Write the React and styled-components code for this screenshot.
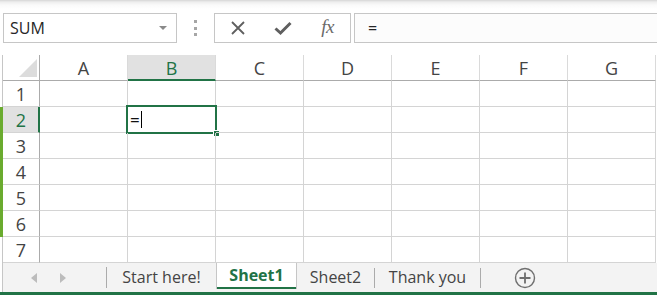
import React from "react";
import styled, { createGlobalStyle } from "styled-components";

const GREEN = "#217346";
const FONT = `"Open Sans", "Noto Sans", "Liberation Sans", sans-serif`;

const Global = createGlobalStyle`
  html, body { margin: 0; padding: 0; background: #fff; overflow: hidden; }
  body { font-family: ${FONT}; }
  * { box-sizing: border-box; }
`;

const Page = styled.div`
  position: relative;
  width: 657px;
  height: 295px;
  display: flex;
  flex-direction: column;
  overflow: hidden;
`;

const Toolbar = styled.div`
  height: 55px;
  flex: none;
  display: flex;
  align-items: flex-start;
  padding-top: 13px;
  background: linear-gradient(#d6d6d6 0px, #eeeeee 2px, #fafafa 5px, #ffffff 9px);
`;

const NameBox = styled.div`
  margin-left: 3px;
  width: 174px;
  height: 30px;
  border: 1px solid #c6c6c6;
  background: #fff;
  display: flex;
  align-items: center;
  justify-content: space-between;
  padding: 0 9px 0 6px;
  font-size: 16px;
  color: #262626;
`;

const Caret = styled.span`
  width: 0;
  height: 0;
  border-left: 4px solid transparent;
  border-right: 4px solid transparent;
  border-top: 4px solid #8a8a8a;
`;

const Dots = styled.div`
  margin-left: 17px;
  margin-top: 7px;
  width: 3px;
  height: 16px;
  display: flex;
  flex-direction: column;
  justify-content: space-between;
  & > span { display: block; width: 3px; height: 3px; background: #a6a6a6; }
`;

const ButtonGroup = styled.div`
  margin-left: 17px;
  width: 137px;
  height: 30px;
  border: 1px solid #c6c6c6;
  background: #fff;
  display: flex;
`;

const IconSlot = styled.div`
  width: 45px;
  display: flex;
  align-items: center;
  justify-content: center;
`;

const Fx = styled.span`
  font-family: "Liberation Serif", "DejaVu Serif", serif;
  font-style: italic;
  font-size: 19px;
  color: #6a6a6a;
  letter-spacing: -0.5px;
  margin-top: -2px;
`;

const FormulaInput = styled.div`
  margin-left: 3px;
  flex: 1;
  height: 30px;
  border: 1px solid #c6c6c6;
  border-right: none;
  background: #fcfcfc;
  display: flex;
  align-items: center;
  padding-left: 13px;
  font-size: 16px;
  color: #262626;
`;

const Sheet = styled.div`
  margin-left: 2px;
  border-left: 1px solid #c6c6c6;
  display: grid;
  grid-template-columns: 37px repeat(7, 88px);
  grid-template-rows: 26px repeat(7, 26px);
  flex: none;
`;

const Corner = styled.div`
  border-right: 1px solid #ababab;
  border-bottom: 1px solid #ababab;
  display: flex;
  align-items: flex-end;
  justify-content: flex-end;
  padding: 0 2px 3px 0;
`;

const ColHeader = styled.div`
  border-right: 1px solid #dadada;
  border-bottom: ${p => (p.$active ? `2px solid ${GREEN}` : "1px solid #ababab")};
  background: ${p => (p.$active ? "#e1e1e1" : "#fff")};
  color: ${p => (p.$active ? GREEN : "#444")};
  font-size: 18px;
  display: flex;
  align-items: center;
  justify-content: center;
  padding-top: ${p => (p.$active ? "1px" : "0")};
`;

const RowHeader = styled.div`
  border-right: ${p => (p.$active ? `2px solid ${GREEN}` : "1px solid #ababab")};
  border-bottom: 1px solid #d4d4d4;
  background: ${p => (p.$active ? "#e1e1e1" : "#fff")};
  color: ${p => (p.$active ? GREEN : "#444")};
  font-size: 18px;
  display: flex;
  align-items: center;
  justify-content: center;
  padding-left: ${p => (p.$active ? "1px" : "0")};
`;

const Cell = styled.div`
  position: relative;
  border-right: 1px solid #d4d4d4;
  border-bottom: 1px solid #d4d4d4;
  font-size: 17px;
  color: #111;
  display: flex;
  align-items: center;
  padding-left: 2px;
`;

const Selection = styled.div`
  position: absolute;
  top: -2px;
  left: -2px;
  width: 91px;
  height: 29px;
  border: 2px solid ${GREEN};
  pointer-events: none;
`;

const Handle = styled.span`
  position: absolute;
  right: -4px;
  bottom: -4px;
  width: 6px;
  height: 6px;
  background: ${GREEN};
  border: 1px solid #fff;
  border-right: none;
  border-bottom: none;
`;

const Cursor = styled.span`
  display: inline-block;
  width: 1px;
  height: 17px;
  background: #000;
  margin-left: 1px;
`;

const TabBar = styled.div`
  margin-left: 2px;
  border-left: 1px solid #c6c6c6;
  height: 29px;
  flex: none;
  background: #f3f3f3;
  display: flex;
  align-items: stretch;
`;

const Nav = styled.div`
  width: 104px;
  display: flex;
  align-items: center;
  padding-left: 28px;
  gap: 23px;
  position: relative;
  &::after {
    content: "";
    position: absolute;
    right: 0;
    top: 4px;
    bottom: 4px;
    width: 1px;
    background: #ababab;
  }
`;

const Arrow = styled.span`
  width: 0;
  height: 0;
  border-top: 5px solid transparent;
  border-bottom: 5px solid transparent;
  ${p => (p.$dir === "left" ? "border-right: 6px solid #bcbcbc;" : "border-left: 6px solid #bcbcbc;")}
`;

const Tab = styled.div`
  width: ${p => p.$w}px;
  display: flex;
  align-items: center;
  justify-content: center;
  font-size: 16px;
  color: #444;
  padding-bottom: 2px;
  ${p =>
    p.$active &&
    `
    background: #fff;
    border-left: 1px solid #c6c6c6;
    border-right: 1px solid #c6c6c6;
    margin-bottom: 3px;
    color: ${GREEN};
    font-weight: 700;
    box-shadow: inset 0 -2px 0 ${GREEN};
  `}
`;

const Sep = styled.span`
  width: 1px;
  align-self: center;
  height: 20px;
  background: #ababab;
`;

const Plus = styled.div`
  margin-left: 33px;
  display: flex;
  align-items: center;
`;

const BottomBar = styled.div`
  height: 3px;
  flex: none;
  background: ${GREEN};
`;

const EdgeGlow = styled.div`
  position: absolute;
  left: 0;
  top: 107px;
  width: 3px;
  height: 130px;
  background: #6aab2f;
`;

const cols = ["A", "B", "C", "D", "E", "F", "G"];
const rows = [1, 2, 3, 4, 5, 6, 7];

export default function App() {
  return (
    <Page>
      <Global />
      <Toolbar>
        <NameBox>
          SUM
          <Caret />
        </NameBox>
        <Dots>
          <span />
          <span />
          <span />
        </Dots>
        <ButtonGroup>
          <IconSlot>
            <svg width="16" height="16" viewBox="0 0 16 16">
              <path d="M2 2 L14 14 M14 2 L2 14" stroke="#5f5f5f" strokeWidth="1.8" fill="none" />
            </svg>
          </IconSlot>
          <IconSlot>
            <svg width="18" height="16" viewBox="0 0 18 16">
              <path d="M1.5 8.5 L6.5 13 L16.5 3" stroke="#5f5f5f" strokeWidth="3" fill="none" strokeLinejoin="miter" />
            </svg>
          </IconSlot>
          <IconSlot>
            <Fx>fx</Fx>
          </IconSlot>
        </ButtonGroup>
        <FormulaInput>=</FormulaInput>
      </Toolbar>

      <Sheet>
        <Corner>
          <svg width="18" height="18" viewBox="0 0 18 18">
            <polygon points="18,0 18,18 0,18" fill="#dcdcdc" />
          </svg>
        </Corner>
        {cols.map(c => (
          <ColHeader key={c} $active={c === "B"}>
            {c}
          </ColHeader>
        ))}
        {rows.map(r => (
          <React.Fragment key={r}>
            <RowHeader $active={r === 2}>{r}</RowHeader>
            {cols.map(c => {
              const sel = r === 2 && c === "B";
              return (
                <Cell key={c}>
                  {sel && (
                    <>
                      =<Cursor />
                      <Selection>
                        <Handle />
                      </Selection>
                    </>
                  )}
                </Cell>
              );
            })}
          </React.Fragment>
        ))}
      </Sheet>

      <TabBar>
        <Nav>
          <Arrow $dir="left" />
          <Arrow $dir="right" />
        </Nav>
        <Tab $w={109}>Start here!</Tab>
        <Tab $w={81} $active>
          Sheet1
        </Tab>
        <Tab $w={77}>Sheet2</Tab>
        <Sep />
        <Tab $w={105}>Thank you</Tab>
        <Sep />
        <Plus>
          <svg width="22" height="22" viewBox="0 0 22 22">
            <circle cx="11" cy="11" r="9.5" stroke="#6f6f6f" strokeWidth="1.4" fill="none" />
            <path d="M11 5.5 V16.5 M5.5 11 H16.5" stroke="#6f6f6f" strokeWidth="1.8" />
          </svg>
        </Plus>
      </TabBar>
      <BottomBar />
      <EdgeGlow />
    </Page>
  );
}
